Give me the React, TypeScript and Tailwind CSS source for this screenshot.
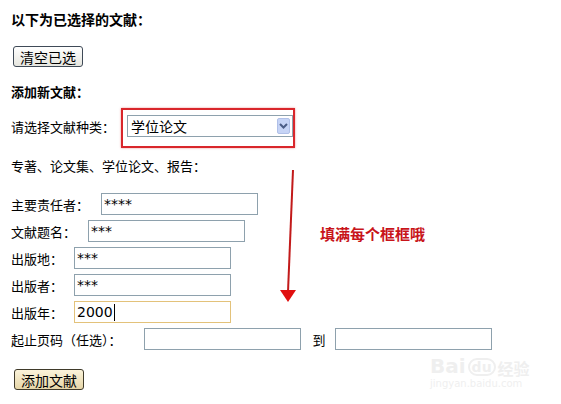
import React from "react";

const body = { fontFamily: '"Noto Sans CJK SC", "DejaVu Sans", sans-serif' };
const mono = { fontFamily: '"DejaVu Sans", "Noto Sans CJK SC", sans-serif' };

function Field({ label, value, focused, gap }: { label: string; value?: string; focused?: boolean; gap: string }) {
  return (
    <div className="flex items-center h-[22px] mb-[5px]">
      <span className={`text-[13px] leading-none ${gap}`}>{label}</span>
      <div
        className={`w-[157px] h-[22px] border bg-white flex items-center pl-[2px] text-[14px] leading-none text-black ${
          focused ? "border-[#e3c27a]" : "border-[#8ea1ad]"
        }`}
        style={mono}
      >
        <span>{value}</span>
        {focused && <span className="w-px h-[17px] bg-black ml-[1px]" />}
      </div>
    </div>
  );
}

export default function App() {
  return (
    <div className="relative w-[561px] h-[404px] bg-white text-black overflow-hidden" style={body}>
      <div className="pl-[11px] pt-[11px]">
        <div className="text-[14px] font-bold leading-[16px]">以下为已选择的文献：</div>
        <div className="mt-[19px] ml-[2px]">
          <div className="w-[70px] h-[21px] border border-[#3f4a57] rounded-[3px] bg-gradient-to-b from-white to-[#e6e6df] flex items-center justify-center text-[14px] leading-none">
            清空已选
          </div>
        </div>
        <div className="mt-[17px] text-[13px] font-bold leading-[16px]">添加新文献：</div>

        <div className="flex items-center mt-[15px] h-[22px]">
          <span className="text-[13px] leading-none mr-[12px]">请选择文献种类：</span>
          <div className="relative">
            <div className="w-[166px] h-[22px] border border-[#8ea1ad] bg-white flex items-center justify-between pl-[3px] pr-[2px]">
              <span className="text-[14px] leading-none">学位论文</span>
              <div className="w-[13px] h-[16px] rounded-[2px] bg-[#c6d4f6] border border-[#b0c0e8] flex items-center justify-center">
                <svg width="9" height="6" viewBox="0 0 9 6">
                  <path d="M1 1 L4.5 4.5 L8 1" stroke="#4b5d86" strokeWidth="2" fill="none" />
                </svg>
              </div>
            </div>
            <div className="absolute left-[-6px] top-[-7px] w-[174px] h-[40px] border-2 border-[#d9262b] pointer-events-none shadow-[0_0_2px_rgba(220,40,40,0.5)]" />
          </div>
        </div>

        <div className="mt-[21px] text-[13px] leading-[16px]">专著、论文集、学位论文、报告：</div>

        <div className="mt-[19px]">
          <Field label="主要责任者：" value="****" gap="mr-[12px]" />
          <Field label="文献题名：" value="***" gap="mr-[12px]" />
          <Field label="出版地：" value="***" gap="mr-[11px]" />
          <Field label="出版者：" value="***" gap="mr-[11px]" />
          <Field label="出版年：" value="2000" focused gap="mr-[11px]" />
          <div className="flex items-center h-[22px] mt-[1px]">
            <span className="text-[13px] leading-none mr-[22px]">起止页码（任选）：</span>
            <div className="w-[157px] h-[22px] border border-[#8ea1ad] bg-white" />
            <span className="text-[13px] leading-none ml-[12px] mr-[9px]">到</span>
            <div className="w-[157px] h-[22px] border border-[#8ea1ad] bg-white" />
          </div>
        </div>

        <div className="mt-[19px] ml-[3px]">
          <div className="w-[70px] h-[21px] border border-[#3f3a2a] rounded-[3px] bg-gradient-to-b from-[#fbf3da] to-[#e6d6a8] flex items-center justify-center text-[14px] leading-none">
            添加文献
          </div>
        </div>
      </div>

      {/* annotation arrow */}
      <svg className="absolute left-[278px] top-[168px]" width="24" height="136" viewBox="0 0 24 136">
        <line x1="15" y1="2" x2="10" y2="124" stroke="#c21a1a" strokeWidth="2" />
        <polygon points="2,122 18,122 10,134" fill="#e01010" />
      </svg>
      <div className="absolute left-[320px] top-[226px] text-[15px] font-bold leading-none text-[#c8141a]">
        填满每个框框哦
      </div>

      {/* watermark */}
      <div className="absolute left-[430px] top-[356px] flex items-end text-[#efefef] leading-none">
        <span className="text-[20px] font-bold" style={{ fontFamily: '"DejaVu Sans", sans-serif' }}>Bai</span>
        <span className="text-[14px] font-bold ml-[2px] border-2 border-[#efefef] rounded-full px-[2px]" style={{ fontFamily: '"DejaVu Sans", sans-serif' }}>du</span>
        <span className="text-[16px] font-bold ml-[2px]">经验</span>
      </div>
      <div className="absolute left-[430px] top-[379px] text-[10px] leading-none text-[#efefef]" style={{ fontFamily: '"DejaVu Sans", sans-serif' }}>
        jingyan.baidu.com
      </div>
    </div>
  );
}
